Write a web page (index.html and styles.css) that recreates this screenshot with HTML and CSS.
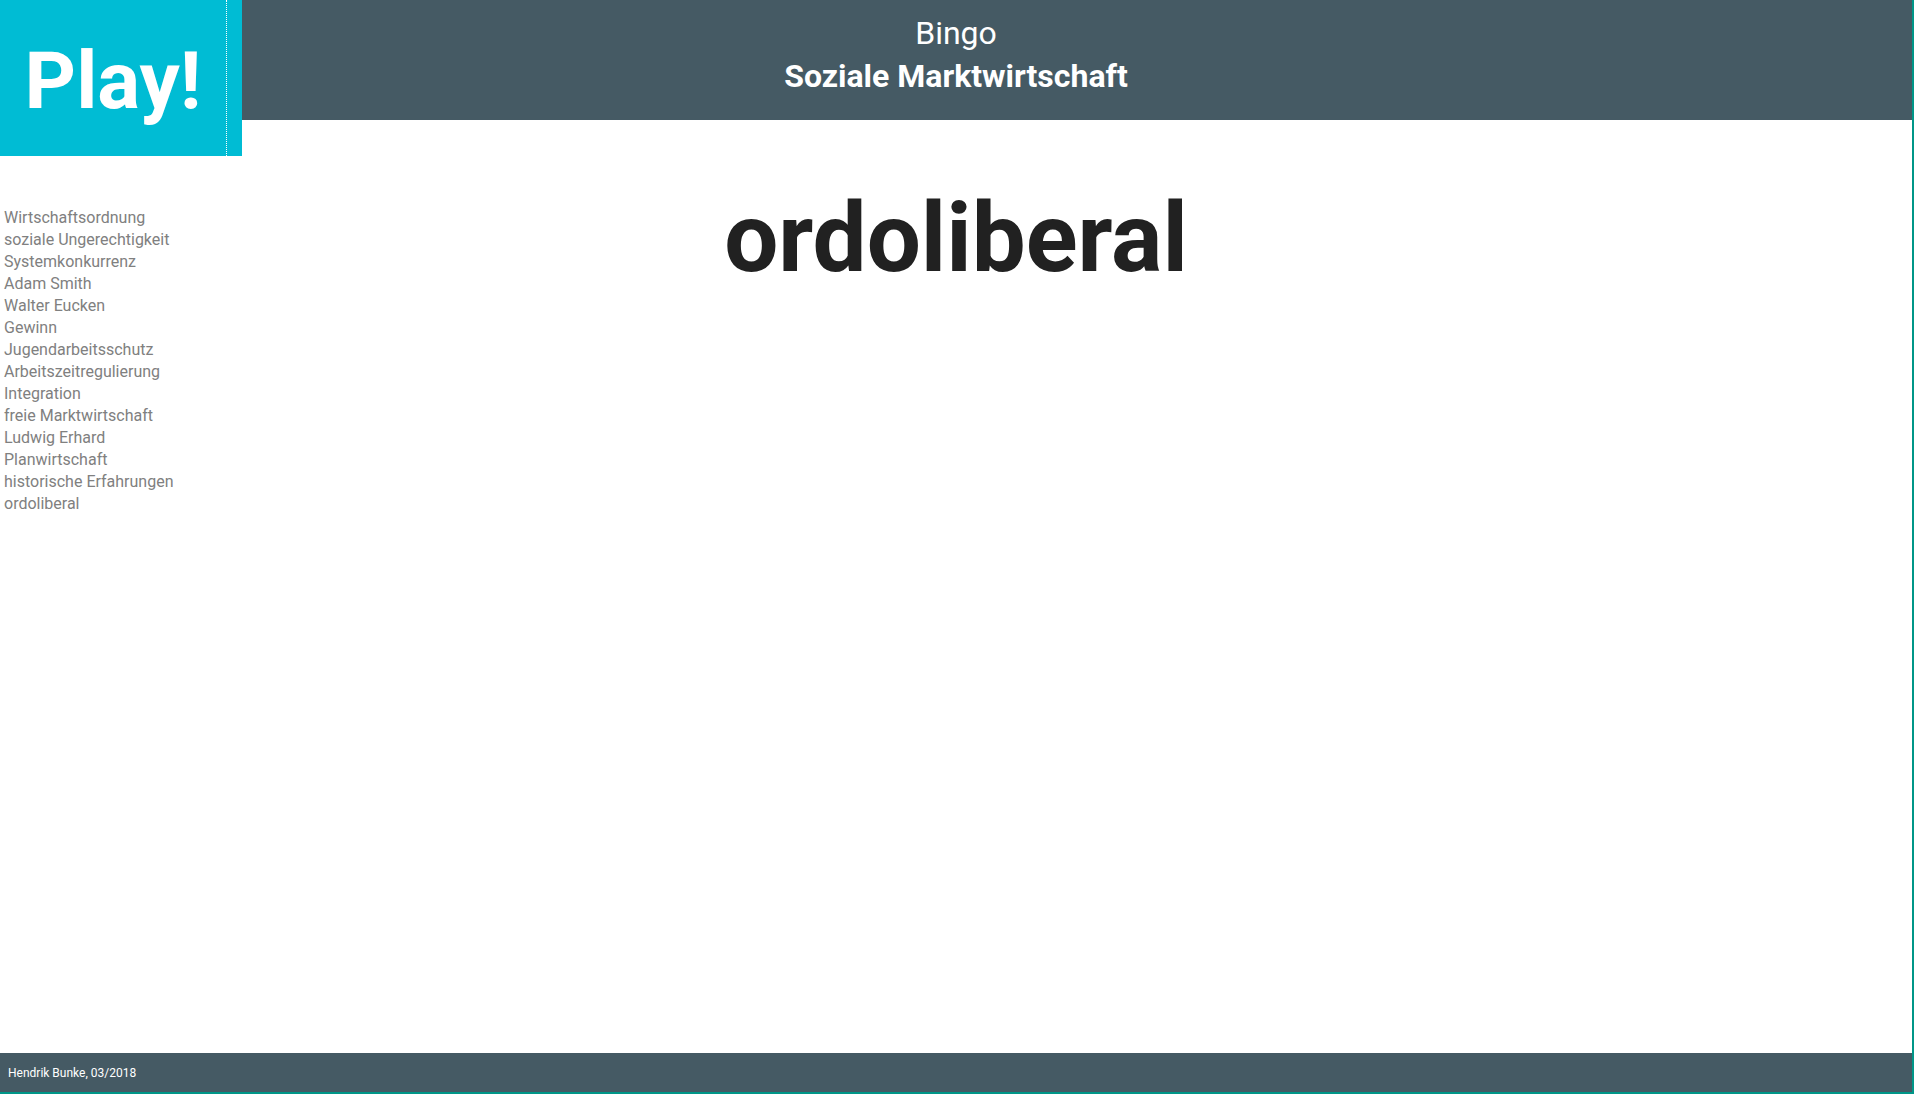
FILE: index.html
```html
<!DOCTYPE html>
<html lang="de">
<head>
<meta charset="utf-8">
<title>Bingo – Soziale Marktwirtschaft</title>
<link rel="stylesheet" href="styles.css">
</head>
<body>
<div class="page">
  <header class="topbar">
    <div class="logo"><div class="logo-inner">Play!</div></div>
    <div class="title-small">Bingo</div>
    <div class="title-big">Soziale Marktwirtschaft</div>
  </header>
  <div class="content">
    <ul class="words">
      <li>Wirtschaftsordnung</li>
      <li>soziale Ungerechtigkeit</li>
      <li>Systemkonkurrenz</li>
      <li>Adam Smith</li>
      <li>Walter Eucken</li>
      <li>Gewinn</li>
      <li>Jugendarbeitsschutz</li>
      <li>Arbeitszeitregulierung</li>
      <li>Integration</li>
      <li>freie Marktwirtschaft</li>
      <li>Ludwig Erhard</li>
      <li>Planwirtschaft</li>
      <li>historische Erfahrungen</li>
      <li>ordoliberal</li>
    </ul>
    <main class="current">
      <h1 class="word">ordoliberal</h1>
    </main>
    <div class="spacer"></div>
  </div>
  <footer class="footer">Hendrik Bunke, 03/2018</footer>
</div>
</body>
</html>
```

FILE: styles.css
```css
html, body {
  margin: 0;
  padding: 0;
  height: 100%;
  overflow: hidden;
}
body {
  font-family: Roboto, "Liberation Sans", Arial, sans-serif;
  background: #ffffff;
}
.page {
  position: relative;
  box-sizing: border-box;
  height: 100vh;
  display: flex;
  flex-direction: column;
  border-right: 2px solid #009688;
}
.topbar {
  position: relative;
  flex: none;
  height: 120px;
  box-sizing: border-box;
  padding-top: 12px;
  background: #455a64;
  color: #ffffff;
  text-align: center;
}
.title-small {
  font-size: 32px;
  line-height: 43px;
  font-weight: 400;
}
.title-big {
  font-size: 32px;
  line-height: 43px;
  font-weight: 700;
}
.logo {
  position: absolute;
  left: 0;
  top: 0;
  width: 242px;
  height: 156px;
  box-sizing: border-box;
  padding-right: 15px;
  background: #00bcd4;
}
.logo-inner {
  height: 156px;
  box-sizing: border-box;
  border-right: 1px dotted #ffffff;
  padding-top: 34px;
  font-size: 80px;
  line-height: 94px;
  font-weight: 700;
  color: #ffffff;
  text-align: center;
}
.content {
  flex: 1;
  display: grid;
  grid-template-columns: 242px 1fr 242px;
}
.words {
  list-style: none;
  margin: 87px 0 0 0;
  padding: 0 0 0 4px;
  font-size: 16px;
  line-height: 22px;
  color: #808080;
}
.current {
  text-align: center;
}
.word {
  margin: 62px 0 0 0;
  font-size: 96px;
  line-height: 112px;
  font-weight: 700;
  color: #212121;
}
.footer {
  flex: none;
  height: 39px;
  display: flex;
  align-items: center;
  padding-left: 8px;
  background: #455a64;
  border-bottom: 2px solid #009688;
  color: #ffffff;
  font-size: 12px;
}
```
